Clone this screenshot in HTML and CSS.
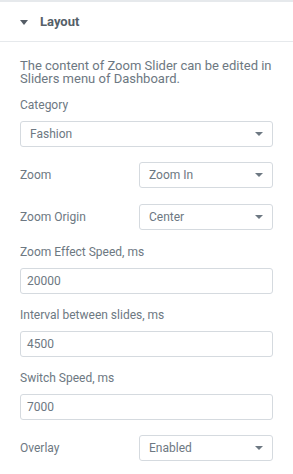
FILE: index.html
```html
<!DOCTYPE html>
<html>
<head>
<meta charset="utf-8">
<link rel="stylesheet" href="styles.css">
</head>
<body>
<div class="panel">
  <div class="topbar"></div>
  <div class="header">
    <svg class="caret" width="8" height="5" viewBox="0 0 8 5"><path d="M0 0H8L4 5Z" fill="#555d66"/></svg>
    <span class="title">Layout</span>
  </div>
  <div class="content">
    <p class="desc">The content of Zoom Slider can be edited in Sliders menu of Dashboard.</p>

    <div class="field block first">
      <div class="label">Category</div>
      <div class="select full"><span>Fashion</span><i class="arrow"></i></div>
    </div>

    <div class="field inline">
      <div class="label">Zoom</div>
      <div class="select half"><span>Zoom In</span><i class="arrow"></i></div>
    </div>

    <div class="field inline">
      <div class="label">Zoom Origin</div>
      <div class="select half"><span>Center</span><i class="arrow"></i></div>
    </div>

    <div class="field block after-inline">
      <div class="label">Zoom Effect Speed, ms</div>
      <div class="input">20000</div>
    </div>

    <div class="field block">
      <div class="label">Interval between slides, ms</div>
      <div class="input">4500</div>
    </div>

    <div class="field block">
      <div class="label">Switch Speed, ms</div>
      <div class="input">7000</div>
    </div>

    <div class="field inline">
      <div class="label">Overlay</div>
      <div class="select half"><span>Enabled</span><i class="arrow"></i></div>
    </div>
  </div>
</div>
</body>
</html>
```

FILE: styles.css
```css
* { box-sizing: border-box; }
html, body { margin: 0; padding: 0; background: #fff; }
body { font-family: Roboto, "Liberation Sans", sans-serif; color: #6d7882; }
.panel { width: 293px; }
.topbar { height: 2px; background: #e6e9ec; }
.header {
  height: 40px;
  border-bottom: 1px solid #e6e9ec;
  display: flex;
  align-items: center;
  padding-left: 20px;
}
.caret { margin-right: 12px; margin-top: 1px; }
.title { font-weight: 700; font-size: 13px; color: #556068; }
.content { padding: 17px 20px 0 20px; display: flex; flex-direction: column; }
.desc { margin: 0; font-size: 13px; line-height: 13px; color: #6d7882; }
.field { display: flex; }
.field.block { flex-direction: column; margin-top: 14px; }
.field.block.first { margin-top: 13px; }
.field.block.after-inline { margin-top: 15px; }
.field.block .label { margin-bottom: 9px; }
.field.inline { align-items: center; justify-content: space-between; margin-top: 16px; }
.field.block + .field.inline { margin-top: 15px; }
.label { font-size: 12px; line-height: 14px; }
.select, .input {
  height: 26px;
  border: 1px solid #d5dadf;
  border-radius: 3px;
  font-size: 12px;
  display: flex;
  align-items: center;
  color: #6d7882;
  background: #fff;
}
.select { padding: 0 9px 0 9px; justify-content: space-between; }
.input { padding: 0 6px; }
.select.half { width: 134px; }
.arrow {
  width: 0; height: 0;
  border-left: 4px solid transparent;
  border-right: 4px solid transparent;
  border-top: 4px solid #6d7882;
}
```
